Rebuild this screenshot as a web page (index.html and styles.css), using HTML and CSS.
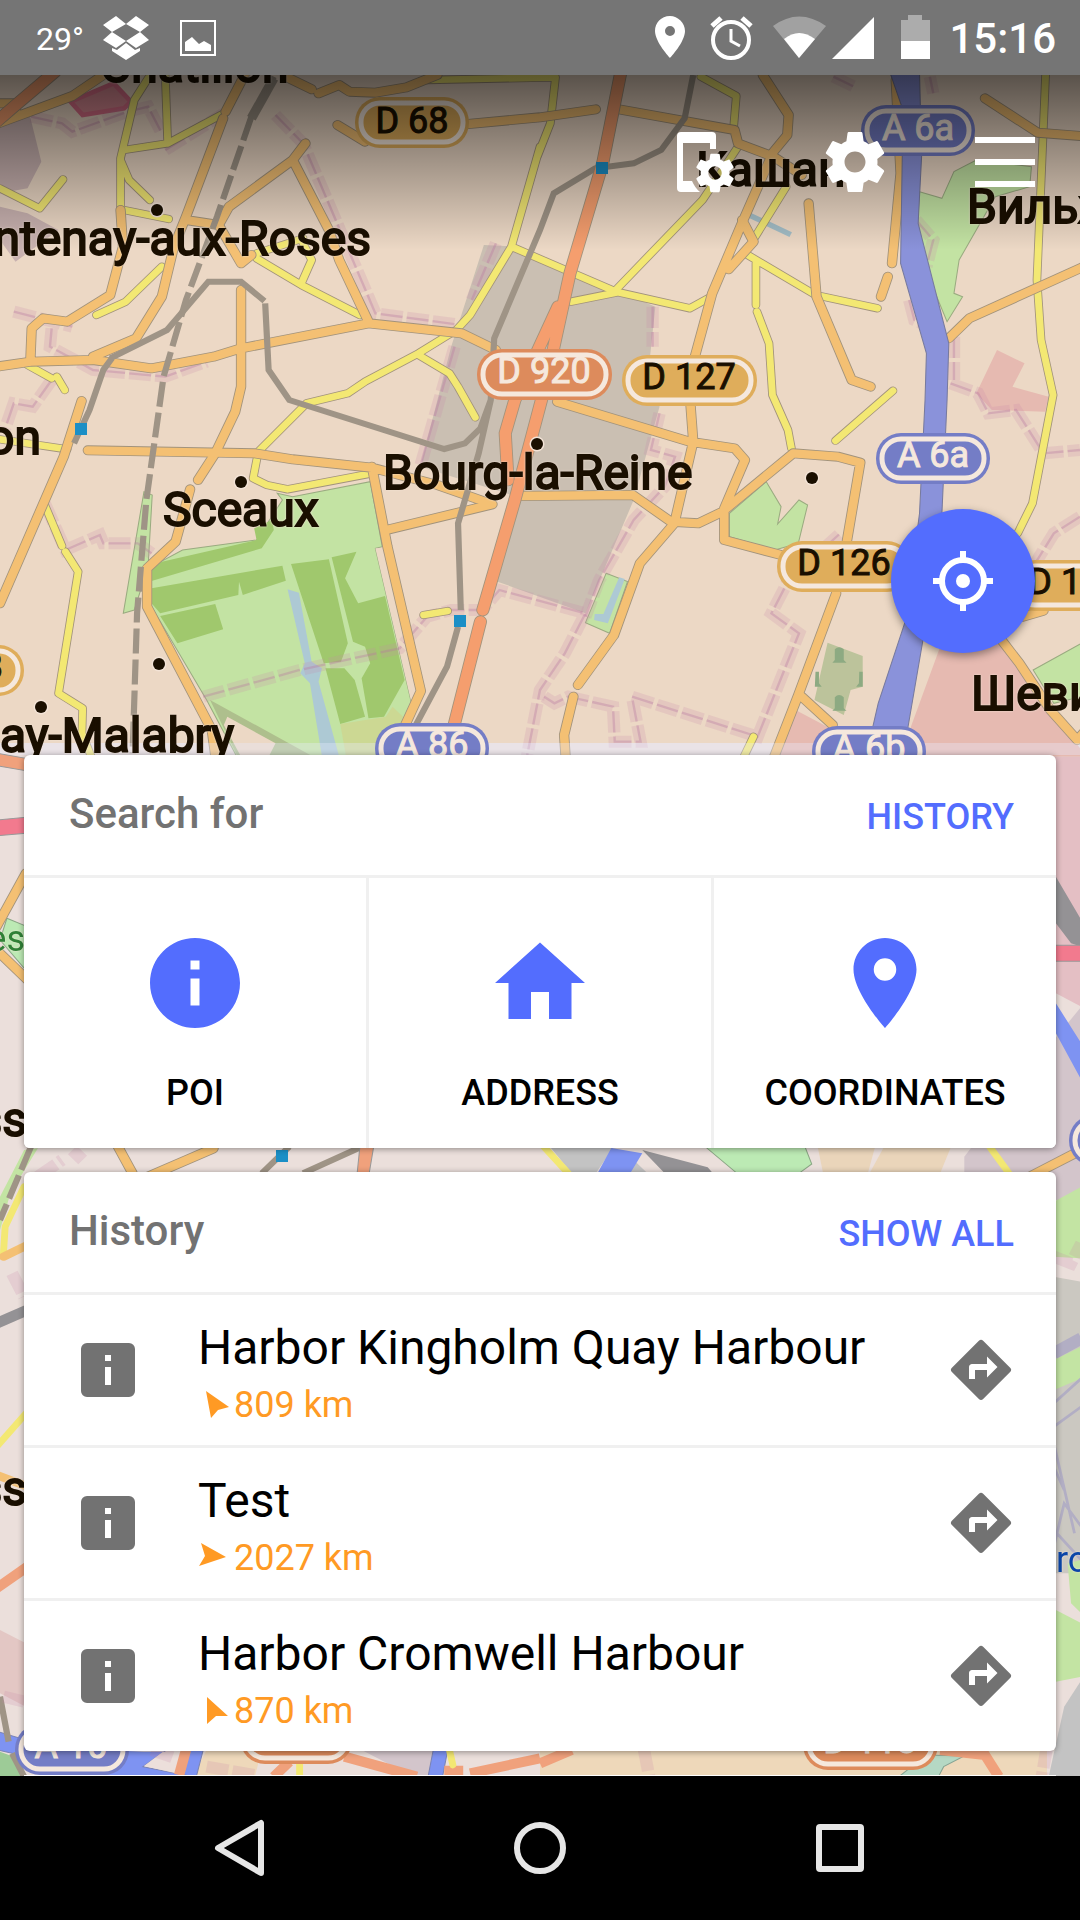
FILE: index.html
```html
<!DOCTYPE html>
<html lang="en">
<head>
<meta charset="utf-8">
<meta name="viewport" content="width=device-width, initial-scale=1">
<title>Map search</title>
<link rel="stylesheet" href="styles.css">
</head>
<body>
<svg class="defs" width="0" height="0" aria-hidden="true">
  <symbol id="i-pin" viewBox="0 0 24 24"><path d="M12 2C8.13 2 5 5.13 5 9c0 5.25 7 13 7 13s7-7.75 7-13c0-3.87-3.13-7-7-7zm0 9.5a2.5 2.5 0 0 1 0-5 2.5 2.5 0 0 1 0 5z"/></symbol>
  <symbol id="i-info" viewBox="0 0 24 24"><path d="M12 2C6.48 2 2 6.48 2 12s4.48 10 10 10 10-4.48 10-10S17.52 2 12 2zm1 15h-2v-6h2v6zm0-8h-2V7h2v2z"/></symbol>
  <symbol id="i-home" viewBox="0 0 24 24"><path d="M10 20v-6h4v6h5v-8h3L12 3 2 12h3v8z"/></symbol>
  <symbol id="i-infobox" viewBox="0 0 24 24"><path fill-rule="evenodd" d="M5 3h14a2 2 0 0 1 2 2v14a2 2 0 0 1-2 2H5a2 2 0 0 1-2-2V5a2 2 0 0 1 2-2zM11 7v2h2V7zM11 11v6h2v-6z"/></symbol>
  <symbol id="i-go" viewBox="0 0 24 24"><path d="M21.71 11.29l-9-9a.996.996 0 0 0-1.41 0l-9 9a.996.996 0 0 0 0 1.41l9 9c.39.39 1.02.39 1.41 0l9-9a.996.996 0 0 0 0-1.41zM14 14.5V12h-4v3H8v-4c0-.55.45-1 1-1h5V7.500l3.500 3.500-3.500 3.500z"/></symbol>
  <symbol id="i-gear" viewBox="0 0 24 24"><path d="M19.43 12.98c.04-.32.07-.64.07-.98s-.03-.66-.07-.98l2.110-1.650c.19-.15.24-.42.12-.64l-2-3.460c-.12-.22-.39-.3-.61-.22l-2.490 1c-.52-.4-1.080-.73-1.690-.98l-.38-2.650C14.460 2.180 14.250 2 14 2h-4c-.25 0-.46.18-.49.42l-.38 2.650c-.61.25-1.170.59-1.690.98l-2.490-1c-.23-.09-.49 0-.61.22l-2 3.460c-.13.22-.07.49.12.64l2.110 1.650c-.04.32-.07.65-.07.98s.03.66.07.98l-2.110 1.650c-.19.15-.24.42-.12.64l2 3.460c.12.22.39.3.61.22l2.490-1c.52.4 1.080.73 1.690.98l.38 2.650c.03.24.24.42.49.42h4c.25 0 .46-.18.49-.42l.38-2.650c.61-.25 1.170-.59 1.690-.98l2.490 1c.23.09.49 0 .61-.22l2-3.460c.12-.22.07-.49-.12-.64l-2.110-1.650zM12 15.500c-1.930 0-3.500-1.570-3.500-3.500s1.570-3.500 3.500-3.500 3.500 1.570 3.500 3.500-1.570 3.500-3.500 3.500z"/></symbol>
</svg>

<header class="status">
  <div class="status-left">
    <span class="temp">29°</span>
    <svg class="s-box" viewBox="0 0 46 44"><path d="M13 0L23 8L9 16L0 9ZM33 0L46 9L37 16L23 8ZM9 16L23 25L13 32L0 24ZM37 16L46 24L33 32L23 25ZM23 27L32 34L37 32V35L23 44L9 35V32L14 34Z"/></svg>
    <svg class="s-img" viewBox="0 0 36 36"><path fill-rule="evenodd" d="M0 0H36V36H0ZM2 2V34H34V2Z"/><path d="M5 31V22L12 17L19 24L24 21L31 25V31Z"/></svg>
  </div>
  <div class="status-right">
    <svg class="w60" viewBox="641 0 60 75"><path fill-rule="evenodd" d="M670 16C661 16 655 23 655 31C655 42 670 58 670 58S685 42 685 31C685 23 678 16 670 16ZM670 26A5 5 0 1 1 670 36A5 5 0 1 1 670 26Z"/></svg>
    <svg class="w60" viewBox="701 0 60 75"><g fill="none" stroke="#fff"><circle cx="731" cy="40" r="18" stroke-width="4"/><path stroke-width="3" d="M731 29V41L740 46"/><path stroke-width="5" d="M712 26L721 18M742 18L751 26"/></g></svg>
    <svg class="w68" viewBox="761 0 68 75"><path opacity=".32" d="M773 26Q799 7 826 26L799 58Z"/><path d="M784 39Q799 27 815 39L799 58Z"/></svg>
    <svg class="w60" viewBox="829 0 60 75"><path d="M874 17V59H832Z"/></svg>
    <svg class="w60" viewBox="887 0 60 75"><path opacity=".4" d="M899 20H906V15H920V20H928V41H899Z"/><path d="M899 41H928V59H899Z"/></svg>
    <time class="clock">15:16</time>
  </div>
</header>

<main class="screen">
  <svg class="map" viewBox="0 75 1080 1701" preserveAspectRatio="xMidYMin slice" aria-hidden="true">
    <defs>
      <g id="yellow">
        <path d="M0 565L115 625L183 538M430 235L390 300L350 475V620M480 230L487 430L360 450M487 430L650 340M350 480L375 540L435 600M360 630L490 657M280 945L365 905L470 800M745 760L880 715M745 775L875 855L1045 945M875 850L905 780L880 730M1568 440L1485 740L1365 945L1325 990L1215 1060L1060 1145L1010 1180L890 1210L750 1355L735 1435L775 1455L835 1468L1080 1420M1215 1065L1305 1120L1330 1160L1380 1252M1485 740L1788 875L2003 925L2065 890M80 1095L150 1135M165 1130L188 1170M1240 240L1613 232L1598 370L1560 470"/>
        <path d="M2035 230L2138 288L2130 385M2143 440L2040 600L1788 870M1658 905L1788 878M2283 560L2190 715M2163 760L2368 885L2548 925M2195 790V915M2198 935L2233 1030L2243 1185L2288 1290L2298 1345M3036 225L3011 840L3023 1020L3058 1185L2998 1510L2955 1600M2593 1172L2426 1322M2188 2210L2160 2270M0 1318L195 1348M130 1515L180 1638M190 1655L227 1715L170 2080L240 2125L238 2200L265 2270M1230 1845L1300 1833"/>
      </g>
      <g id="orange">
        <path d="M-10 372L210 288L300 225M-10 310L40 310L50 345M710 225L655 335M648 355L540 650L505 740L470 890L395 1015L270 1070M540 660L635 675L700 790L730 765M635 675L665 620L850 480L887 430M850 480L955 690L985 780L1070 965M-10 1100L90 1085L270 1080L440 1105L620 1070L700 1045L1070 970L1340 1000L1440 1050M350 630L357 740L320 885L195 965L125 955L92 985L88 1085M700 870V1160L683 1235L625 1360L575 1440M830 230L905 268M925 280L985 255L1015 275L1090 278L1180 262L1270 225M980 375L1060 425M1360 372L1568 352L1730 328"/>
        <path d="M237 1203L185 1370L0 1810M255 1351L740 1360L850 1378L1080 1403L1270 1455L1430 1513L1130 1588M552 1468L510 1625L427 1705V1820L615 2190L625 2265M1080 1400L1125 1640L1222 2073L1170 2190M1500 1488L1838 1485L1948 1565L2028 1570L2098 1535L2303 1360L2433 1370L2498 1388L2458 1630M1618 1205L2003 1325L2133 1345L2163 1380L2103 1525V1620L2268 1665M2005 1215L2013 1325L1958 1570L1858 1690L1783 1905L1678 2055M1665 2090L1638 2205L1643 2280M2428 1780L2318 2085L2248 2270M2328 2090L2418 2175M2908 1920L2960 1990L3050 2130L3128 2220L3145 2200M2970 1850L3030 1832"/>
        <path d="M2348 610L2371 890L2473 1140L2528 1160M1798 328L2133 390L2143 430L2240 468L2150 680L2068 880L2015 1080M2215 225L2290 345L2286 405L2238 465L2328 525M2155 660L2188 725L2116 808M2601 240L2615 520L2590 790M2578 830L2558 890M2860 295L3013 398L3140 408M2755 1015L2815 955L3140 803"/>
      </g>
      <g id="salmon">
        <path d="M1803 215L1750 490L1655 820L1585 1150L1495 1500L1402 1830M1620 920L1495 1200L1467 1300L1475 1440M1395 1865L1315 2190M160 215L40 320L-10 365"/>
      </g>
      <g id="bounds">
        <path d="M90 350L180 370L210 395L370 335L430 320L470 400M40 935L210 980M150 985L145 1040L200 1070L270 1110L480 1130L600 1085M480 450L650 340M800 345L880 430L1090 940L1340 975M1440 730L1370 900M150 1140L95 1220L40 1210L10 1300M130 1510L190 1650L290 1605L300 1630L400 1630L440 1660M590 2090L870 2010L1160 1945L1240 1850L1310 1830L1400 1830L1450 1770L1700 1840L1640 1960L1568 2070L1530 2270M1320 1040L1220 1400"/>
        <path d="M1915 1240L1890 1350L1960 1370L1930 1460L1840 1560L1740 1740L1700 1850M1580 2090L1610 2110L1650 2090L1780 2120L1785 2225L1860 2225L1835 2090L2200 2210L2320 1900L2240 1840L2290 1740L2440 1600M2760 1150L2840 1180L2870 1240L2950 1230L3030 1360L3136 1350M3136 1550L3060 1600L3000 1700M2640 900L2655 960L2700 980M2770 1010V1140M1895 920V1040M2660 660L2710 720L2690 800M2420 230L2480 260M2700 230L2710 280"/>
      </g>
    </defs>

    <rect class="land" y="75" width="1080" height="668"/>
    <rect class="land-low" y="743" width="1080" height="1040"/>

    <g transform="scale(.34439 .33333)">
      <path fill="#cabfb2" d="M1405 735L1500 740L1655 810L1903 920L1888 1065L1915 1220L1840 1500L1700 1840L1445 1745L1500 1490L1220 1400L1310 1040Z"/>
      <path fill="#c9b2b0" d="M0 380L85 340L120 485L80 565L0 580ZM0 620L80 640L170 690L45 785L0 720Z"/>
      <path fill="#d98a93" stroke="#dc6f88" stroke-width="14" d="M205 305L330 250L380 305L360 325L240 345Z"/>
      <path fill="#e6bab1" d="M2895 1050L2975 1090L2940 1160L3045 1190L3035 1235L2880 1230L2835 1180ZM2730 1940L2910 1930L3140 2250V2270H2640L2645 2180ZM2310 2130L2420 2190L2400 2270H2260Z"/>
      <g fill="#c3e3a3" stroke="#9aab80" stroke-width="3">
        <path d="M2670 575L2735 595L2770 515L2835 480L2995 500L2990 560L2890 590L2785 780L2770 880L2795 890L2750 965L2700 840L2665 670Z"/>
        <path d="M2118 1540L2225 1445L2268 1520L2258 1572L2320 1500L2345 1515L2318 1630L2250 1650L2118 1610Z"/>
        <path d="M1760 1720L1822 1745L1770 1900L1700 1868ZM418 1475L442 1485L430 1700L390 1830L358 1840ZM3000 2010L3140 1930V2090L3060 2110Z"/>
        <path d="M440 1700L530 1650L745 1620L820 1500L805 1480L850 1490L1075 1445L1110 1640L1090 1645L1195 2110L1150 2275H690L600 2100L440 1820Z"/>
      </g>
      <g fill="#a0c86d">
        <path d="M470 1685L745 1620L738 1585L790 1560L795 1590L760 1645L440 1743V1700ZM440 1765L820 1697L830 1742L705 1785L694 1745L692 1785L465 1840L440 1810ZM465 1848L625 1812L648 1888L515 1930Z"/>
        <path d="M845 1692L955 1678L1010 1930L990 1985L940 1990ZM963 1672L1035 1655L1002 1735L1040 1810L1118 1788L1175 2040L1115 2150L1070 2155L1050 2035L1075 1990L1060 1940L1025 1925ZM945 2005L1000 2005L1030 2040L1060 2150L988 2172Z"/>
      </g>
      <path fill="#aebf8d" d="M610 2100L910 2270H690Z"/>
      <path fill="#ecd8c5" d="M660 2150L800 2230L780 2270H700L650 2175ZM1090 1645L1115 1645L1210 2080L1195 2110Z"/>
      <path fill="#ccd893" d="M988 2172L1120 2150L1140 2120L1170 2150L1150 2270H1005Z"/>
      <path fill="#adc9d4" d="M835 1768L868 1778L905 1985L935 2005L925 2045L985 2270H935L900 2050L872 2020L885 1990ZM1798 1732L1814 1737L1765 1870L1725 1860L1727 1842L1752 1842Z"/>
      <path stroke="#a3bdc6" stroke-width="16" d="M2165 640L2296 704"/>
      <path fill="#bcc39b" d="M2403 1928L2505 1968V2060L2470 2070L2450 2145L2365 2100Z"/>
      <path fill="#8daa82" d="M2424 1980V1948Q2436 1935 2450 1948V1980L2458 1988H2417ZM2424 2125V2092Q2436 2078 2450 2092V2125L2458 2132H2417ZM2368 2015H2378V2050L2386 2060H2366ZM2495 2015H2505V2060H2486L2494 2050Z"/>

      <use href="#bounds" class="bound-wide"/>
      <use href="#bounds" class="bound-thin"/>

      <use href="#yellow" class="casing casing-thin"/>
      <use href="#yellow" class="road road-yellow"/>
      <use href="#orange" class="casing"/>
      <use href="#orange" class="road road-orange"/>
      <path class="rail" d="M320 1075L485 990L605 845H700L768 903M770 910L780 1110L840 1200L1290 1347L1350 1330L1395 1285L1425 1200M325 1075L300 1110L260 1230L215 1330M2013 225L1988 355L1920 450L1840 490L1728 505L1608 580L1568 690L1435 1015L1425 1200L1390 1360L1330 1570L1338 1830M1330 1880L1298 2000L1205 2180M795 230L775 270"/>
      <path class="rail rail-bold" d="M795 235L730 355"/>
      <path class="rail dashed" d="M730 350L630 650L540 900L475 1130L425 1500L398 1840L385 2260"/>
      <use href="#salmon" class="casing casing-wide"/>
      <use href="#salmon" class="road road-salmon"/>
      <path fill="#8a92da" stroke="#777a9e" stroke-width="3" d="M2585 220H2670L2676 470L2666 670L2755 1030L2750 1200L2735 1540L2680 1920L2635 2190L2530 2200L2550 2110L2630 1860L2670 1540L2686 1200L2690 1060L2615 790L2622 330Z"/>
    </g>
    <rect y="743" width="1080" height="12" fill="#e9eaff" opacity=".35"/>

    <g transform="translate(0 740) scale(.34439 .33333)">
      <path fill="#e4bfc4" d="M3060 50H3140V800L3066 760Z"/>
      <path fill="#d3c5cb" d="M3060 900L3140 800V1380H2800V1250Z"/>
      <path fill="#c3c3c3" d="M1600 1224H1780L1730 1300H1660ZM1840 1260L1880 1300H1830Z"/>
      <path fill="#bceab4" stroke="#8aa785" stroke-width="3" d="M2050 1222H2338L2357 1272L2320 1300H2140ZM20 535L75 558V690L0 600Z"/>
      <path fill="#ead5ba" d="M2375 1224H2540L2520 1300H2390ZM2565 1224H2760L2730 1300H2525Z"/>
      <path fill="#7e93f2" d="M1775 1224L1865 1240L1830 1300H1735ZM3066 790L3140 910V1020L3066 880Z"/>
      <path fill="#949295" d="M1865 1230L2055 1282L2070 1300H1930ZM3066 410L3140 540V620L3110 610L3066 550Z"/>
      <path class="casing" d="M-10 560L75 400M-10 630L80 720M340 1215L385 1300M430 1310L620 1225M2990 1310L3140 1230"/>
      <path class="road road-orange" d="M-10 560L75 400M-10 630L80 720M340 1215L385 1300M430 1310L620 1225M2990 1310L3140 1230"/>
      <path class="road road-yellow" d="M1570 1210L1650 1300M2870 1215L2930 1300"/>
      <path class="rail" d="M840 1220L760 1300M1050 1220L880 1300"/>
      <path fill="#f27a8e" stroke="#999" stroke-width="3" d="M-5 240L75 232V280L-5 287ZM3060 616H3140V664H3060Z"/>
      <path fill="#f0a17c" stroke="#999" stroke-width="3" d="M-5 40L75 55V92L-5 78ZM1045 1220H1085L1072 1300H1037Z"/>
    </g>

    <g transform="translate(0 1130) scale(.34439 .33333)">
      <path fill="#cbc8c1" d="M3060 440L3140 455V1330H3060Z"/>
      <path fill="#c3e4a3" d="M3060 215L3140 170V385L3060 380ZM3060 690L3140 650V745L3060 780ZM70 60L0 200V300L30 190L110 55Z"/>
      <path fill="none" stroke="#b2aec4" stroke-width="36" d="M3060 670L3140 625"/>
      <path fill="none" stroke="#b2aec4" stroke-width="8" d="M3060 820L3140 745M3060 890L3140 830M3060 940L3120 1210M3060 1010L3090 1080M3060 1250L3090 1120L3140 1190M3060 1200L3140 1290"/>
      <path class="road road-yellow" d="M70 170L15 290L10 370M-10 950L80 845"/>
      <path class="road road-orange" d="M10 380L80 345M-10 1035L80 1070"/>
      <path fill="none" stroke="#949295" stroke-width="32" d="M-10 580L80 540"/>
      <path class="rail dashed" d="M90 50L0 270"/>
      <path class="bound-wide" d="M35 430L70 500M110 140L180 90M210 60L240 90M3060 380L3110 400L3140 340"/>
    </g>

    <g transform="translate(0 1500) scale(.34439 .33333)">
      <path fill="#e3c7c4" d="M0 390L75 430V620L0 580Z"/>
      <path fill="#eed8ba" d="M600 750H760L740 830H560ZM1568 750H3040V830H1568Z"/>
      <path fill="#d3c5cb" d="M1050 750H1260L1245 830H1200Z"/>
      <path fill="#c3e4a3" d="M3066 330L3140 370V530L3066 545ZM3100 190L3140 180V340L3110 310Z"/>
      <path fill="#c3c3c3" d="M3090 620L3140 540V830H3045Z"/>
      <path fill="#b5d8c4" stroke="#86a392" stroke-width="3" d="M2690 765L2800 768L2740 800L2725 830H2610Z"/>
      <path fill="#9dcb97" d="M0 755L40 770L70 830H0Z"/>
      <path fill="#7e93f2" stroke="#7a83b5" stroke-width="3" d="M-5 695L75 720L490 745L415 800L560 830H330L-5 750ZM545 750H590L570 830H530ZM1258 750H1300L1285 830H1243Z"/>
      <path fill="#ecdfdb" d="M370 755L480 750L418 798L520 822L535 755H460Z"/>
      <g fill="none" stroke="#f0a17c" stroke-width="30"><path d="M540 750L520 825M840 785L795 830M1000 770L1210 830M1365 820L1568 775M1568 790L1660 750M1290 812H1345M-10 265L80 200M2730 750L2860 765L2900 830"/></g>
      <g class="road road-yellow"><path d="M870 790V830M1305 750L1315 795"/></g>
      <path class="rail" d="M0 590L25 725M35 760L70 830"/>
      <path class="bound-wide" d="M1870 750L1885 830M3040 740L3025 830M440 750L510 775M600 800L740 825M10 590L70 605"/>
    </g>

    <g class="stops">
      <rect x="596" y="162" width="12" height="12"/><rect x="75" y="423" width="12" height="12"/><rect x="454" y="615" width="12" height="12"/><rect x="276" y="1150" width="12" height="12"/>
    </g>
    <g class="dots">
      <circle cx="157" cy="210" r="6"/><circle cx="537" cy="444" r="6"/><circle cx="812" cy="478" r="6"/><circle cx="241" cy="482" r="6"/><circle cx="159" cy="664" r="6"/><circle cx="41" cy="707" r="6"/>
    </g>

    <g class="shield gold">
      <rect class="plate" x="355" y="97" width="114" height="51" rx="25"/><rect class="ring" x="361" y="103" width="102" height="39" rx="19"/><text x="412" y="133">D 68</text>
      <rect class="plate" x="622" y="355" width="135" height="51" rx="25"/><rect class="ring" x="628" y="361" width="123" height="39" rx="19"/><text x="689" y="389">D 127</text>
      <rect class="plate" x="777" y="541" width="135" height="51" rx="25"/><rect class="ring" x="783" y="547" width="123" height="39" rx="19"/><text x="844" y="575">D 126</text>
      <rect class="plate" x="1010" y="560" width="135" height="51" rx="25"/><rect class="ring" x="1016" y="566" width="123" height="39" rx="19"/><text x="1075" y="594">D 160</text>
      <rect class="plate" x="-111" y="645" width="135" height="51" rx="25"/><rect class="ring" x="-105" y="651" width="123" height="39" rx="19"/><text x="-44" y="679">D 128</text>
    </g>
    <g class="shield rust">
      <rect class="plate" x="477" y="349" width="135" height="51" rx="25"/><rect class="ring" x="483" y="355" width="123" height="39" rx="19"/><text x="544" y="383">D 920</text>
      <rect class="plate" x="240" y="1713" width="113" height="51" rx="25"/><rect class="ring" x="246" y="1719" width="101" height="39" rx="19"/>
      <rect class="plate" x="803" y="1719" width="135" height="51" rx="25"/><rect class="ring" x="809" y="1725" width="123" height="39" rx="19"/><text x="870" y="1753">D 118</text>
    </g>
    <g class="shield blue">
      <rect class="plate" x="861" y="105" width="114" height="51" rx="25"/><rect class="ring" x="867" y="111" width="102" height="39" rx="19"/><text x="918" y="140">A 6a</text>
      <rect class="plate" x="876" y="433" width="114" height="51" rx="25"/><rect class="ring" x="882" y="439" width="102" height="39" rx="19"/><text x="933" y="467">A 6a</text>
      <rect class="plate" x="375" y="723" width="114" height="51" rx="25"/><rect class="ring" x="381" y="729" width="102" height="39" rx="19"/><text x="432" y="757">A 86</text>
      <rect class="plate" x="812" y="726" width="114" height="51" rx="25"/><rect class="ring" x="818" y="732" width="102" height="39" rx="19"/><text x="869" y="760">A 6b</text>
      <rect class="plate" x="15" y="1724" width="114" height="51" rx="25"/><rect class="ring" x="21" y="1730" width="102" height="39" rx="19"/><text x="71" y="1758">A 10</text>
      <rect class="plate" x="1069" y="1115" width="114" height="51" rx="25"/><rect class="ring" x="1075" y="1121" width="102" height="39" rx="19"/>
    </g>

    <g class="places">
      <text x="100" y="82">Châtillon</text>
      <text x="371" y="255" text-anchor="end">Fontenay-aux-Roses</text>
      <text x="696" y="186">Кашан</text>
      <text x="967" y="223">Вильжюиф</text>
      <text x="41" y="454" text-anchor="end">Clamon</text>
      <text x="163" y="526">Sceaux</text>
      <text x="383" y="489">Bourg-la-Reine</text>
      <text x="234" y="752" text-anchor="end">Châtenay-Malabry</text>
      <text x="971" y="710">Шевийи</text>
      <text x="27" y="1136" text-anchor="end">ss</text>
      <text x="27" y="1505" text-anchor="end">ss</text>
      <text class="green" x="25" y="951" text-anchor="end">es</text>
      <text class="water" x="1056" y="1572">ro</text>
    </g>
  </svg>
  <div class="shade"></div>

  <nav class="toolbar" aria-label="Map tools">
    <button class="tool" aria-label="Configure screen">
      <svg viewBox="0 0 72 72"><path d="M12 6H43Q47 6 47 10V23H41V17H14V55H23Q26 62 31 66H12Q8 66 8 62V10Q8 6 12 6Z"/><use href="#i-gear" x="23" y="24" width="46" height="46"/></svg>
    </button>
    <button class="tool" aria-label="Settings"><svg><use href="#i-gear"/></svg></button>
    <button class="tool" aria-label="Menu"><svg viewBox="0 0 72 72"><path d="M6 11H66V17H6ZM6 33H66V39H6ZM6 55H66V61H6Z"/></svg></button>
  </nav>

  <button class="fab" aria-label="My location">
    <svg viewBox="0 0 72 72"><g fill="none" stroke="#fff" stroke-width="6"><circle cx="36" cy="36" r="21"/><path d="M36 6V14M36 58V66M6 36H14M58 36H66"/></g><circle cx="36" cy="36" r="7" fill="#fff"/></svg>
  </button>

  <div class="sheet">
    <section class="card">
      <header class="card-head"><h2>Search for</h2><button class="link">HISTORY</button></header>
      <div class="kinds">
        <button class="kind"><svg><use href="#i-info"/></svg>POI</button>
        <button class="kind"><svg><use href="#i-home"/></svg>ADDRESS</button>
        <button class="kind"><svg><use href="#i-pin"/></svg>COORDINATES</button>
      </div>
    </section>

    <section class="card">
      <header class="card-head"><h2>History</h2><button class="link">SHOW ALL</button></header>
      <ul class="list">
        <li class="item">
          <svg class="ico"><use href="#i-infobox"/></svg>
          <div class="body"><h3>Harbor Kingholm Quay Harbour</h3><p><svg class="dir" viewBox="0 0 36 36"><path d="M8 4L31 20L20 23L13 31Z"/></svg>809 km</p></div>
          <button class="go" aria-label="Directions"><svg class="ico"><use href="#i-go"/></svg></button>
        </li>
        <li class="item">
          <svg class="ico"><use href="#i-infobox"/></svg>
          <div class="body"><h3>Test</h3><p><svg class="dir" viewBox="0 0 36 36"><path d="M3 3L28 17L1 26L7 16Z"/></svg>2027 km</p></div>
          <button class="go" aria-label="Directions"><svg class="ico"><use href="#i-go"/></svg></button>
        </li>
        <li class="item">
          <svg class="ico"><use href="#i-infobox"/></svg>
          <div class="body"><h3>Harbor Cromwell Harbour</h3><p><svg class="dir" viewBox="0 0 36 36"><path d="M9 4L30 23L18 23L9 31Z"/></svg>870 km</p></div>
          <button class="go" aria-label="Directions"><svg class="ico"><use href="#i-go"/></svg></button>
        </li>
      </ul>
    </section>
    <div class="peek"></div>
  </div>
</main>

<nav class="sysnav" aria-label="System">
  <button aria-label="Back"><svg viewBox="0 0 72 72"><path d="M57 11V61L14 36Z"/></svg></button>
  <button aria-label="Home"><svg viewBox="0 0 72 72"><circle cx="36" cy="36" r="23"/></svg></button>
  <button aria-label="Recent apps"><svg viewBox="0 0 72 72"><rect x="15" y="15" width="42" height="42" rx="1"/></svg></button>
</nav>
</body>
</html>
```
FILE: styles.css
```css
* { box-sizing: border-box; margin: 0; padding: 0; }
body {
  display: flex;
  flex-direction: column;
  min-height: 100vh;
  font-family: Roboto, "Noto Sans", sans-serif;
  background: #000;
}
button { border: 0; background: none; font: inherit; color: inherit; cursor: pointer; }
svg { display: block; }
.defs { position: absolute; }

/* status bar */
.status {
  display: flex;
  justify-content: space-between;
  height: 75px;
  padding: 0 24px 0 36px;
  background: #757575;
  color: #fff;
  fill: #fff;
}
.status-left, .status-right { display: flex; align-items: center; }
.temp { width: 67px; padding-top: 2px; font-family: "Liberation Sans Narrow", Roboto, sans-serif; font-size: 32px; white-space: nowrap; }
.s-box { width: 46px; height: 44px; margin-right: 31px; }
.s-img { width: 36px; height: 36px; }
.w60 { width: 60px; height: 75px; }
.w68 { width: 68px; height: 75px; }
.clock { padding-top: 3px; font-size: 42px; font-weight: 500; line-height: 48px; }

/* map */
.screen {
  position: relative;
  display: flex;
  flex-direction: column;
  flex: 1;
  overflow: hidden;
  background: #ebdfdb;
}
.map { position: absolute; inset: 0; width: 100%; height: 100%; }
.shade {
  position: absolute;
  inset: 0 0 auto;
  height: 175px;
  background: linear-gradient(rgba(0, 0, 0, .62), rgba(0, 0, 0, 0));
}
.land { fill: #ecd8c5; }
.land-low { fill: #ebdfdb; }
.casing, .road, .rail, .bound-wide, .bound-thin { fill: none; }
.casing, .road { stroke-linecap: round; stroke-linejoin: round; }
.casing { stroke: #a2937c; stroke-width: 30px; }
.casing-thin { stroke-width: 25px; }
.casing-wide { stroke-width: 38px; }
.road-yellow { stroke: #f3e873; stroke-width: 20px; }
.road-orange { stroke: #f4c073; stroke-width: 25px; }
.road-salmon { stroke: #f59e6e; stroke-width: 33px; }
.rail { stroke: #9f9486; stroke-width: 18px; }
.rail-bold { stroke-width: 28px; }
.dashed { stroke-dasharray: 75 18; }
.bound-wide { stroke: #c787a8; stroke-opacity: .2; stroke-width: 36px; stroke-dasharray: 64 12; }
.bound-thin { stroke: #b878a0; stroke-opacity: .35; stroke-width: 7px; stroke-dasharray: 64 12; }
.stops { fill: #1b8fc6; }
.dots { fill: #1a0f00; stroke: #f3e3d6; stroke-width: 3px; paint-order: stroke; }
.shield text { font-size: 36px; text-anchor: middle; stroke-width: 1px; }
.ring { fill: none; stroke: #f5e8dd; stroke-width: 5px; }
.gold .plate { fill: #dfad5b; }
.gold text { fill: #1a0f00; stroke: #1a0f00; }
.rust .plate { fill: #dd8b5c; }
.blue .plate { fill: #747dc6; }
.rust text, .blue text { fill: #f5e8dd; stroke: #f5e8dd; }
.places { font-size: 48px; fill: #1a0f00; stroke: #1a0f00; stroke-width: 2px; filter: drop-shadow(0 0 1px #f3e3d6); }
.places .green { font-size: 36px; fill: #2f8136; stroke: none; }
.places .water { font-size: 36px; fill: #0b46a8; stroke: none; }

/* controls over the map */
.toolbar, .fab, .sheet { position: relative; }
.toolbar { display: flex; justify-content: flex-end; gap: 78px; padding: 51px 39px 0; }
.tool, .tool svg { width: 72px; height: 72px; fill: #fff; }
.fab {
  display: flex;
  align-items: center;
  justify-content: center;
  align-self: flex-end;
  width: 144px;
  height: 144px;
  margin: auto 45px 102px;
  border-radius: 50%;
  background: #536dfe;
  box-shadow: 0 3px 8px rgba(0, 0, 0, .4);
}
.fab svg { width: 72px; height: 72px; }

/* cards */
.sheet { display: flex; flex-direction: column; gap: 24px; padding: 0 24px; }
.card { border-radius: 6px; background: #fff; box-shadow: 0 1px 6px rgba(0, 0, 0, .4); }
.card-head { display: flex; align-items: flex-start; justify-content: space-between; height: 120px; padding: 34px 42px 0 45px; }
.card-head h2 { font-size: 42px; font-weight: 500; line-height: 50px; color: #727272; }
.link { font-size: 36px; font-weight: 500; line-height: 56px; color: #536dfe; }
.kinds { display: grid; grid-template-columns: repeat(3, 1fr); gap: 3px; border-top: 3px solid #f0f0f0; background: #f0f0f0; border-radius: 0 0 6px 6px; overflow: hidden; }
.kind {
  display: flex;
  flex-direction: column;
  align-items: center;
  gap: 35px;
  padding: 51px 0 34px;
  background: #fff;
  font-size: 36px;
  font-weight: 500;
  line-height: 42px;
  color: #000;
}
.kind svg { width: 108px; height: 108px; fill: #536dfe; }
.list { list-style: none; }
.item { display: flex; align-items: center; height: 153px; padding: 0 39px 0 48px; border-top: 3px solid #f0f0f0; }
.ico { width: 72px; height: 72px; fill: #727272; }
.body { flex: 1; padding: 6px 0 0 54px; }
.body h3 { font-size: 48px; font-weight: 400; line-height: 56px; color: #000; }
.body p { display: flex; align-items: center; margin-top: 8px; font-size: 36px; line-height: 42px; color: #ff9a24; }
.dir { width: 36px; height: 36px; fill: #ff9a24; }
.peek { height: 1px; background: #fff; }

/* system navigation */
.sysnav { display: flex; align-items: center; justify-content: center; gap: 228px; height: 144px; background: #000; }
.sysnav button, .sysnav svg { width: 72px; height: 72px; }
.sysnav svg { fill: none; stroke: #e6e6e6; stroke-width: 6px; stroke-linejoin: round; }
```
